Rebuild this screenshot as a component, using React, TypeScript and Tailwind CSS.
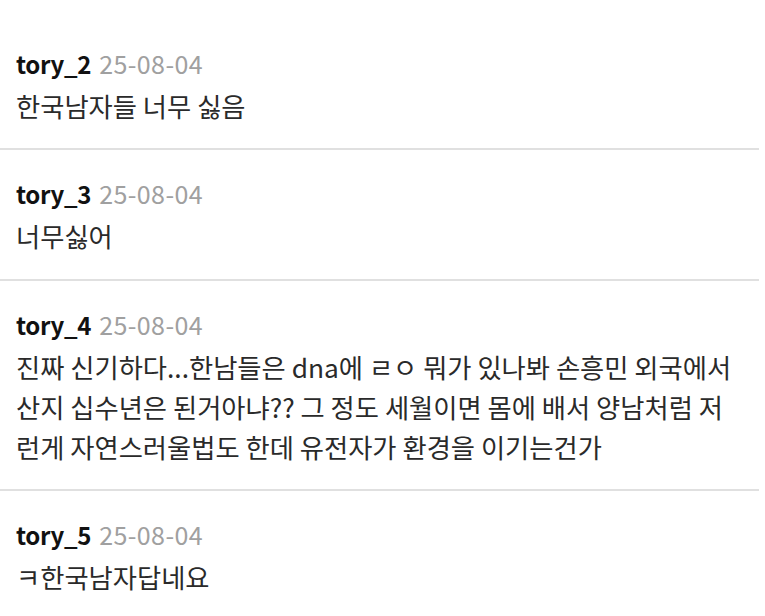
const comments = [
  { user: "tory_2", date: "25-08-04", lines: ["한국남자들 너무 싫음"] },
  { user: "tory_3", date: "25-08-04", lines: ["너무싫어"] },
  {
    user: "tory_4",
    date: "25-08-04",
    lines: [
      "진짜 신기하다...한남들은 dna에 ㄹㅇ 뭐가 있나봐 손흥민 외국에서",
      "산지 십수년은 된거아냐?? 그 정도 세월이면 몸에 배서 양남처럼 저",
      "런게 자연스러울법도 한데 유전자가 환경을 이기는건가",
    ],
  },
  { user: "tory_5", date: "25-08-04", lines: ["ㅋ한국남자답네요"] },
];

export default function App() {
  return (
    <div className="min-h-screen bg-white pt-5 pr-[6px] font-['Noto_Sans_CJK_KR','Noto_Sans',sans-serif]">
      {comments.map((c, i) => (
        <div
          key={c.user}
          className={`px-4 pt-[23px] pb-[22px] ${i < comments.length - 1 ? "border-b-2 border-[#e0e0e0]" : ""}`}
        >
          <div className="flex items-baseline gap-2 leading-[40px]">
            <span className="text-[24px] font-bold text-[#111] tracking-[-0.3px]">{c.user}</span>
            <span className="text-[25px] text-[#a0a0a0] tracking-[0.4px]">{c.date}</span>
          </div>
          <p className="mt-[2px] text-[26.3px] leading-[40.3px] text-[#2a2a2a] whitespace-nowrap">
            {c.lines.map((l, j) => (
              <span key={j} className="block">
                {l}
              </span>
            ))}
          </p>
        </div>
      ))}
    </div>
  );
}
